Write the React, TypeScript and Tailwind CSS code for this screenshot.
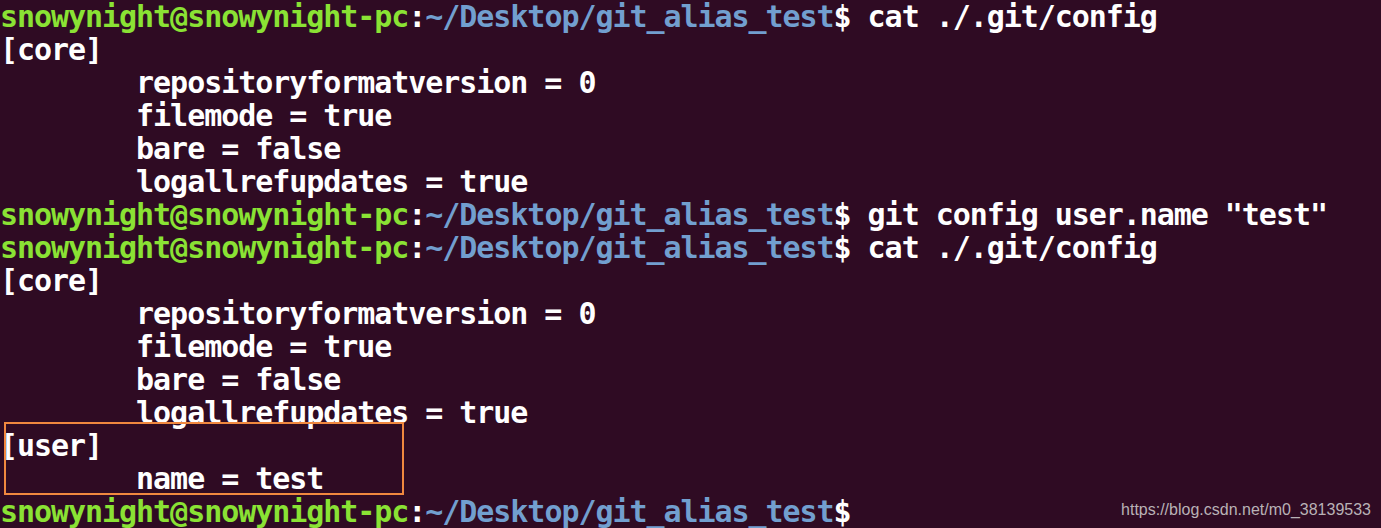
const GREEN = 'text-[#8ae234]'
const BLUE = 'text-[#729fcf]'

type Line =
  | { kind: 'prompt'; cmd: string }
  | { kind: 'out'; text: string }

const lines: Line[] = [
  { kind: 'prompt', cmd: 'cat ./.git/config' },
  { kind: 'out', text: '[core]' },
  { kind: 'out', text: '\trepositoryformatversion = 0' },
  { kind: 'out', text: '\tfilemode = true' },
  { kind: 'out', text: '\tbare = false' },
  { kind: 'out', text: '\tlogallrefupdates = true' },
  { kind: 'prompt', cmd: 'git config user.name "test"' },
  { kind: 'prompt', cmd: 'cat ./.git/config' },
  { kind: 'out', text: '[core]' },
  { kind: 'out', text: '\trepositoryformatversion = 0' },
  { kind: 'out', text: '\tfilemode = true' },
  { kind: 'out', text: '\tbare = false' },
  { kind: 'out', text: '\tlogallrefupdates = true' },
  { kind: 'out', text: '[user]' },
  { kind: 'out', text: '\tname = test' },
  { kind: 'prompt', cmd: '' },
]

function Prompt({ cmd }: { cmd: string }) {
  return (
    <>
      <span className={GREEN}>snowynight@snowynight-pc</span>
      <span className="text-white">:</span>
      <span className={BLUE}>~/Desktop/git_alias_test</span>
      <span className="text-white">$ {cmd}</span>
    </>
  )
}

export default function App() {
  return (
    <div className="relative h-[528px] w-[1381px] overflow-hidden bg-[#2f0b23]">
      <div className="whitespace-pre text-[30px] leading-[33px] font-bold tracking-[-1.05px] text-white [font-family:'DejaVu_Sans_Mono',monospace] [tab-size:8]">
        {lines.map((l, i) => (
          <div key={i}>
            {l.kind === 'prompt' ? <Prompt cmd={l.cmd} /> : l.text}
          </div>
        ))}
      </div>

      {/* 标注框 */}
      <div className="absolute left-[4px] top-[422px] h-[73px] w-[400px] border-2 border-[#f0883f]" />

      <div className="absolute right-[10px] top-[498px] text-[16px] text-[#b9b2b6] [font-family:'Liberation_Sans',Arial,sans-serif]">
        https://blog.csdn.net/m0_38139533
      </div>
    </div>
  )
}
